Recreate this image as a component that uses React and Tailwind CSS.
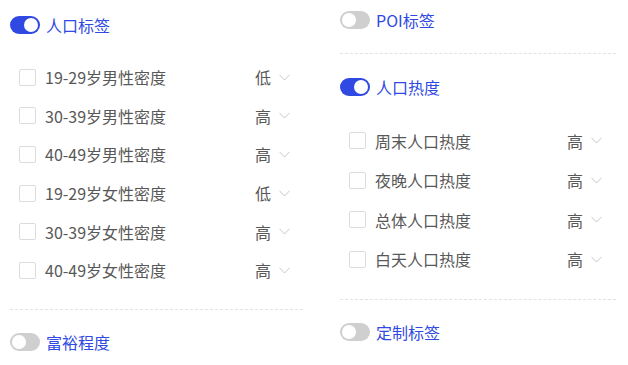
import React from "react";

const FONT = { fontFamily: '"Noto Sans CJK SC", "Noto Sans", sans-serif' };

const Toggle = ({ on }) => (
  <span
    className={`relative inline-flex h-[18px] w-[30px] shrink-0 items-center rounded-full ${
      on ? "bg-[#2f49e2] justify-end" : "bg-[#cfcfcf] justify-start"
    } px-[2px]`}
  >
    <span className="h-[14px] w-[14px] rounded-full bg-white" />
  </span>
);

const Header = ({ on, title, className = "" }) => (
  <div className={`flex h-[30px] items-center gap-[6px] ${className}`}>
    <Toggle on={on} />
    <span className="text-[16px] text-[#2f49e2]">{title}</span>
  </div>
);

const Chevron = () => (
  <svg width="11" height="7" viewBox="0 0 11 7" fill="none">
    <path d="M0.5 0.8 L5.5 6 L10.5 0.8" stroke="#c8c8c8" strokeWidth="1" />
  </svg>
);

const Row = ({ label, value, h }) => (
  <div className={`flex items-center ${h}`}>
    <span className="h-[17px] w-[17px] shrink-0 rounded-[2px] border border-[#dcdcdc] bg-white" />
    <span className="ml-[9px] flex-1 text-[16px] text-[#585858]">{label}</span>
    <span className="text-[16px] text-[#585858]">{value}</span>
    <span className="ml-[8px] flex items-center">
      <Chevron />
    </span>
  </div>
);

const Divider = ({ className = "" }) => (
  <div className={`border-t border-dashed border-[#e2e2e2] ${className}`} />
);

const people = [
  ["19-29岁男性密度", "低"],
  ["30-39岁男性密度", "高"],
  ["40-49岁男性密度", "高"],
  ["19-29岁女性密度", "低"],
  ["30-39岁女性密度", "高"],
  ["40-49岁女性密度", "高"],
];

const heat = [
  ["周末人口热度", "高"],
  ["夜晚人口热度", "高"],
  ["总体人口热度", "高"],
  ["白天人口热度", "高"],
];

export default function App() {
  return (
    <div className="flex h-[365px] w-[628px] overflow-hidden bg-white" style={FONT}>
      {/* left column */}
      <div className="ml-[10px] flex w-[293px] flex-col pt-[10px]">
        <Header on title="人口标签" />
        <div className="mt-[18px] pl-[9px] pr-[13px]">
          {people.map(([l, v]) => (
            <Row key={l} label={l} value={v} h="h-[38.6px]" />
          ))}
        </div>
        <Divider className="mt-[19px]" />
        <Header title="富裕程度" className="mt-[17px]" />
      </div>

      {/* right column */}
      <div className="ml-[37px] flex w-[276px] flex-col pt-[5px]">
        <Header title="POI标签" />
        <Divider className="mt-[18px]" />
        <Header on title="人口热度" className="mt-[18px]" />
        <div className="mt-[19px] pl-[9px] pr-[14px]">
          {heat.map(([l, v]) => (
            <Row key={l} label={l} value={v} h="h-[39.5px]" />
          ))}
        </div>
        <Divider className="mt-[20px]" />
        <Header title="定制标签" className="mt-[17px]" />
      </div>
    </div>
  );
}
